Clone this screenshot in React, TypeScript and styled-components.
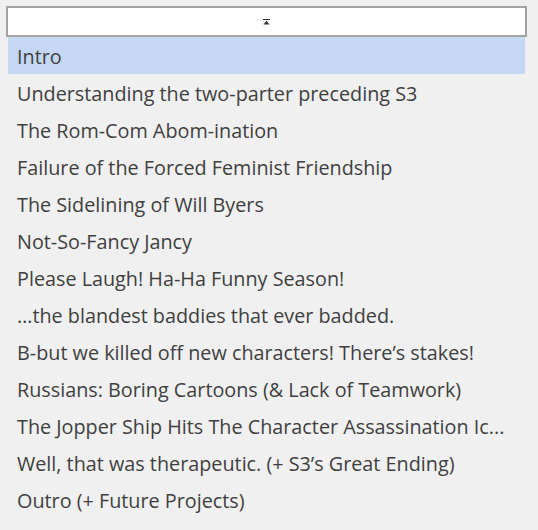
import React from "react";
import styled, { createGlobalStyle } from "styled-components";

const Global = createGlobalStyle`
  html, body { margin: 0; padding: 0; background: #f0f0f0; }
  body { font-family: "Open Sans", "Noto Sans", sans-serif; }
`;

const Page = styled.div`
  width: 538px;
  height: 530px;
  box-sizing: border-box;
  padding: 6px 11px 0 6px;
  display: flex;
  flex-direction: column;
  overflow: hidden;
`;

const ScrollButton = styled.div`
  height: 31px;
  box-sizing: border-box;
  border: 2px solid #a3a3a3;
  background: #ffffff;
  display: flex;
  align-items: center;
  justify-content: center;
`;

const List = styled.ul`
  list-style: none;
  margin: 0;
  padding: 0 2px;
  display: flex;
  flex-direction: column;
`;

const Item = styled.li<{ $selected?: boolean }>`
  height: 37px;
  box-sizing: border-box;
  padding: 2px 9px 0;
  display: flex;
  align-items: center;
  font-size: 19.8px;
  color: #3f3f3f;
  background: ${(p) => (p.$selected ? "#c4d8f4" : "transparent")};
  white-space: nowrap;
`;

const items = [
  "Intro",
  "Understanding the two-parter preceding S3",
  "The Rom-Com Abom-ination",
  "Failure of the Forced Feminist Friendship",
  "The Sidelining of Will Byers",
  "Not-So-Fancy Jancy",
  "Please Laugh! Ha-Ha Funny Season!",
  "…the blandest baddies that ever badded.",
  "B-but we killed off new characters! There’s stakes!",
  "Russians: Boring Cartoons (& Lack of Teamwork)",
  "The Jopper Ship Hits The Character Assassination Ic...",
  "Well, that was therapeutic. (+ S3’s Great Ending)",
  "Outro (+ Future Projects)",
];

export default function App() {
  return (
    <>
      <Global />
      <Page>
        <ScrollButton>
          <svg width="7" height="6" viewBox="0 0 7 6">
            <rect x="0" y="0" width="7" height="1" fill="#333" />
            <path d="M3.5 1.8 L6.5 5.5 L0.5 5.5 Z" fill="#333" />
          </svg>
        </ScrollButton>
        <List>
          {items.map((t, i) => (
            <Item key={i} $selected={i === 0}>
              {t}
            </Item>
          ))}
        </List>
      </Page>
    </>
  );
}
